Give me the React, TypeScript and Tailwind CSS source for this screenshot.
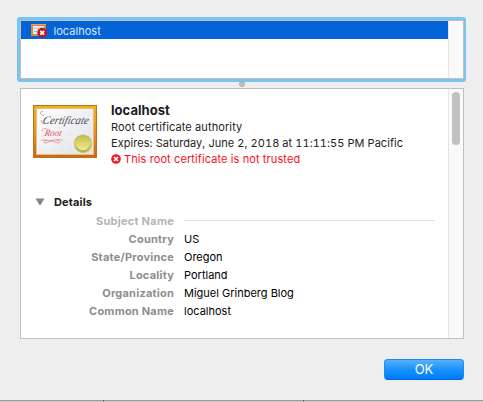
const details = [
  ["Country", "US"],
  ["State/Province", "Oregon"],
  ["Locality", "Portland"],
  ["Organization", "Miguel Grinberg Blog"],
  ["Common Name", "localhost"],
];

function SmallCertificate() {
  return (
    <svg className="ml-2.5 block shrink-0" width="17" height="15" viewBox="0 0 17 15">
      <rect x="0" y="1" width="15" height="12" fill="#d18c3c" />
      <rect x="0" y="1" width="15" height="1" fill="#e6a83f" />
      <rect x="2" y="3" width="11" height="8" fill="#ececec" />
      <path d="M3 5.5c1-2 2 1 3 0s1 1 2 0 2 0 3-.5M3 8.5h4" fill="none" stroke="#9a9ba4" strokeWidth="0.7" />
      <circle cx="11.2" cy="9.7" r="4.9" fill="#c3131f" />
      <path d="M9.3 7.8l3.8 3.8M13.1 7.8l-3.8 3.8" stroke="#fff" strokeWidth="1.9" />
    </svg>
  );
}

function Certificate() {
  const points = Array.from({ length: 40 }, (_, i) => {
    const r = i % 2 ? 8.1 : 9.2;
    const a = (i * Math.PI) / 20;
    return `${50 + r * Math.cos(a)},${38.7 + r * Math.sin(a)}`;
  }).join(" ");
  return (
    <svg className="block shrink-0" width="64" height="53" viewBox="0 0 64 53">
      <defs>
        <linearGradient id="frame" x1="0" y1="0" x2="0" y2="1">
          <stop offset="0" stopColor="#f0b41c" />
          <stop offset="0.5" stopColor="#e59420" />
          <stop offset="1" stopColor="#cc6418" />
        </linearGradient>
        <linearGradient id="paper" x1="0" y1="0" x2="1" y2="1">
          <stop offset="0" stopColor="#ffffff" />
          <stop offset="1" stopColor="#e0e1e5" />
        </linearGradient>
        <linearGradient id="seal" x1="0" y1="0" x2="0" y2="1">
          <stop offset="0" stopColor="#c0ba42" />
          <stop offset="0.5" stopColor="#ded766" />
          <stop offset="1" stopColor="#b4ad35" />
        </linearGradient>
        <linearGradient id="sealFace" x1="0" y1="0" x2="0" y2="1">
          <stop offset="0" stopColor="#c9c34e" />
          <stop offset="1" stopColor="#f0eba0" />
        </linearGradient>
      </defs>
      <rect x="0.5" y="0.5" width="63" height="52" fill="url(#frame)" stroke="#b9741c" />
      <rect x="3.5" y="3.5" width="57" height="46" fill="url(#paper)" stroke="#e8c07a" />
      <text transform="translate(9 18.5) skewX(-14)" textLength="46" lengthAdjust="spacingAndGlyphs" fontFamily="Liberation Serif, serif" fontStyle="italic" fontSize="11.5" fill="#4a4a4a">Certificate</text>
      <path d="M11 10.500C6.500 10 6 6.500 10 6.500M8.500 15c-1 4 3 4.500 6 2.500" fill="none" stroke="#777" strokeWidth="0.6" />
      <text transform="translate(11 30.5) skewX(-14)" textLength="17" lengthAdjust="spacingAndGlyphs" fontFamily="Liberation Serif, serif" fontStyle="italic" fontSize="9.500" fill="#df4654">Root</text>
      <path d="M9.500 26.500c-1-3 2-3.500 4.500-2.500M8 35.500c3.500-1.800 6 .8 10.800 0s8-1.500 11 0M14 35.500c-3.500 0-4 2.500-1.500 2.500s3.500-2 6.300-2 4 2 6.500 2 2-2.500-1.500-2.500" fill="none" stroke="#df6a74" strokeWidth="0.6" />
      <polygon points={points} fill="url(#seal)" stroke="#a29c2c" strokeWidth="0.4" />
      <circle cx="50" cy="38.700" r="6.300" fill="url(#sealFace)" />
    </svg>
  );
}

export default function App() {
  return (
    <div className="flex h-[402px] w-[483px] flex-col overflow-hidden bg-[#eeeeee] font-['Inter',sans-serif] text-[11px] leading-4 text-[#1d1d1d]">
      <div className="mx-[17px] mt-[17px] shrink-0 rounded-[3px] bg-[#7ac3f2] p-[3px]">
        <div className="flex h-[59px] w-[444px] border border-[#bfbfbf] bg-white">
          <div className="flex-1">
            <div className="flex h-[18px] items-center bg-[#0363d7] text-[#dbe8fa]">
              <SmallCertificate />
              <span className="ml-[5.5px] pt-px tracking-[0.03px]">localhost</span>
            </div>
          </div>
          <div className="w-[15px] border-l border-[#e5e5e5] bg-[#fafafa]" />
        </div>
      </div>
      <div className="flex h-1.5 shrink-0 items-end justify-center pb-px">
        <span className="relative size-1.5 rounded-full border border-[#aaa] bg-[#c2c2c2]" />
      </div>
      <div className="mx-5 flex h-[251px] w-[444px] shrink-0 border border-[#bfbfbf] bg-white">
        <main className="flex-1">
          <header className="flex pt-4 pl-3">
            <Certificate />
            <div className="pl-3.5 tracking-[0.1px] whitespace-nowrap">
              <h1 className="mt-[-3px] text-[13px] leading-[17px] font-bold tracking-[0.05px]">localhost</h1>
              <p>Root certificate authority</p>
              <p className="tracking-[0.06px] tabular-nums">Expires: Saturday, June 2, 2018 at 11:11:55 PM Pacific</p>
              <p className="flex items-center text-[#fa101c]">
                <svg className="mr-[3px]" width="10" height="10" viewBox="0 0 10 10">
                  <circle cx="5" cy="5" r="4.800" fill="#ef1b29" />
                  <path d="M3 3l4 4M7 3L3 7" stroke="#fff" strokeWidth="1.700" />
                </svg>
                This root certificate is not trusted
              </p>
            </div>
          </header>
          <section className="pt-[26px]">
            <div className="flex h-[18px] items-center pl-3.5">
              <svg width="10" height="8" viewBox="0 0 10 8"><path d="M.5.5h9L5 7.800z" fill="#858585" /></svg>
              <h2 className="ml-[9px] font-bold tracking-[0.15px]">Details</h2>
            </div>
            <div className="mt-px flex h-[18px] items-center">
              <span className="w-[153px] text-right font-bold tracking-[0.25px] text-[#b5b5b5]">Subject Name</span>
              <span className="mb-0.5 ml-2.5 h-px w-[251px] bg-[#e1e1e1]" />
            </div>
            {details.map(([label, value]) => (
              <div key={label} className="flex h-[18px] items-center">
                <span className="w-[153px] text-right font-bold tracking-[0.22px] text-[#8e8e8e]">{label}</span>
                <span className="ml-2.5 text-black">{value}</span>
              </div>
            ))}
          </section>
        </main>
        <div className="flex w-[15px] justify-center border-l border-[#e5e5e5] bg-[#fafafa] pt-[3px]">
          <div className="h-[53px] w-2 rounded-full bg-[#c1c1c1]" />
        </div>
      </div>
      <button className="mt-5 ml-[384px] h-[21px] w-20 shrink-0 rounded-[4px] border border-[#168cf4] border-b-[#0061dc] bg-linear-to-b from-[#55b0fa] via-[#1692fb] to-[#047bfb] text-[13px] leading-[19px] text-white">OK</button>
      <footer className="mt-5 flex h-0.5 shrink-0 border-t border-[#9c9c9c] bg-[#c6c6c6]">
        <span className="-mt-px ml-[103px] h-0.5 w-px bg-[#777]" />
        <span className="-mt-px ml-[199px] h-0.5 w-px bg-[#777]" />
      </footer>
    </div>
  );
}
